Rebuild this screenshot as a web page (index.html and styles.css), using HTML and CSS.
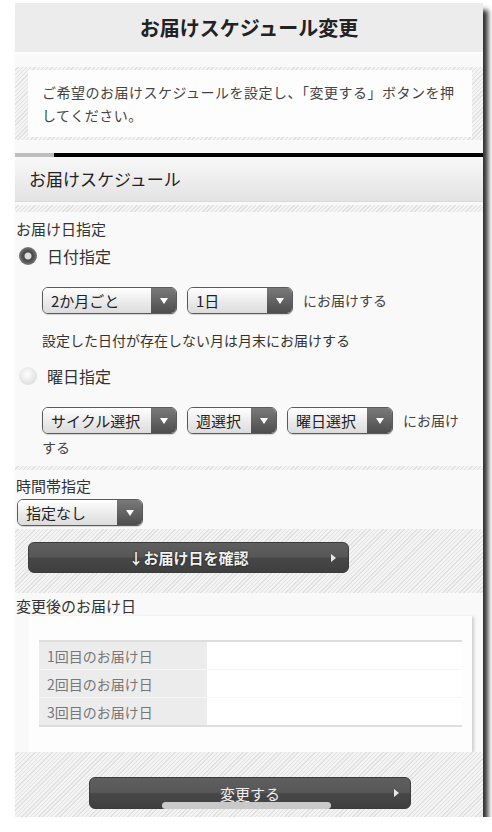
FILE: index.html
```html
<!DOCTYPE html>
<html lang="ja">
<head>
<meta charset="utf-8">
<title>お届けスケジュール変更</title>
<link rel="stylesheet" href="styles.css">
</head>
<body>
<div class="frame">
  <header class="hd"><h1>お届けスケジュール変更</h1></header>
  <div class="intro-wrap hatch"><p class="intro">ご希望のお届けスケジュールを設定し、「変更する」ボタンを押してください。</p></div>
  <div class="bar"></div>
  <h2 class="sec-hd">お届けスケジュール</h2>
  <div class="strip hatch"></div>

  <p class="label first">お届け日指定</p>
  <div class="radio-row"><span class="radio on"></span><span class="radio-text">日付指定</span></div>
  <div class="sel-row r1"><span class="sel w134"><span class="val">2か月ごと</span><span class="arr"><i></i></span></span><span class="sel w105"><span class="val">1日</span><span class="arr"><i></i></span></span><span class="after">にお届けする</span></div>
  <p class="note">設定した日付が存在しない月は月末にお届けする</p>
  <div class="radio-row r2"><span class="radio"></span><span class="radio-text">曜日指定</span></div>
  <div class="sel-row r2"><span class="sel w134"><span class="val">サイクル選択</span><span class="arr"><i></i></span></span><span class="sel w89"><span class="val">週選択</span><span class="arr"><i></i></span></span><span class="sel w105"><span class="val">曜日選択</span><span class="arr"><i></i></span></span><span class="after">にお届けする</span></div>

  <div class="divider hatch"></div>
  <p class="label time">時間帯指定</p>
  <div class="time-sel"><span class="sel w125"><span class="val">指定なし</span><span class="arr"><i></i></span></span></div>

  <div class="btn-area hatch"><a class="btn check">↓お届け日を確認<i class="tri"></i></a></div>

  <p class="label result-label">変更後のお届け日</p>
  <div class="result">
    <table>
      <tr><th>1回目のお届け日</th><td></td></tr>
      <tr><th>2回目のお届け日</th><td></td></tr>
      <tr><th>3回目のお届け日</th><td></td></tr>
    </table>
  </div>

  <div class="foot hatch">
    <a class="btn submit">変更する<i class="tri"></i></a>
    <span class="scroll"></span>
  </div>
</div>
</body>
</html>
```

FILE: styles.css
```css
html, body {
  margin: 0;
  padding: 0;
  background: #fff;
}
body {
  font-family: "Noto Sans CJK JP", "Noto Sans", sans-serif;
  color: #333;
  padding-top: 3px;
}
.frame {
  width: 468px;
  margin-left: 15px;
  background: #f9f9f9;
  box-shadow: 5px 7px 5px rgba(0, 0, 0, 0.82);
}
.hatch {
  background: repeating-linear-gradient(135deg, #f3f3f3 0px, #f3f3f3 2px, #e1e1e1 2px, #e1e1e1 3px);
}
.hd {
  height: 49px;
  background: #ececec;
  border-bottom: 2px solid #fdfdfd;
}
.hd h1 {
  margin: 0;
  font-size: 20px;
  line-height: 49px;
  font-weight: bold;
  text-align: center;
  color: #222;
}
.intro-wrap {
  margin-top: 13px;
  padding: 3px 11px 3px 13px;
}
.intro {
  margin: 0;
  background: #fdfdfd;
  padding: 11px 14px 10px 14px;
  font-size: 14px;
  letter-spacing: 0.5px;
  line-height: 23px;
  color: #444;
}
.bar {
  margin-top: 13px;
  height: 4px;
  background: linear-gradient(to right, #bdbdbd 39px, #000 39px);
}
.sec-hd {
  margin: 0;
  height: 44px;
  border-bottom: 1px solid #d9d9d9;
  background: linear-gradient(#f8f8f8, #e3e3e3);
  font-size: 17px;
  font-weight: normal;
  line-height: 44px;
  padding-left: 14px;
  color: #222;
}
.strip {
  margin-top: 3px;
  height: 7px;
}
.label {
  margin: 0;
  font-size: 15px;
  line-height: 20px;
  padding-left: 1px;
  color: #333;
}
.label.first { margin-top: 7px; }
.radio-row {
  margin-top: 5px;
  height: 24px;
  display: flex;
  align-items: center;
  padding-left: 4px;
}
.radio-row.r2 { margin-top: 14px; }
.radio {
  width: 18px;
  height: 18px;
  border-radius: 50%;
  background: radial-gradient(circle at 45% 40%, #ffffff 0%, #e6e6e6 55%, #d2d2d2 100%);
}
.radio.on {
  background: radial-gradient(circle at 50% 50%, #e4e4e4 0px, #d8d8d8 3px, #4a4a4a 4px, #555 6px, #7a7a7a 9px);
}
.radio-text {
  margin-left: 10px;
  font-size: 16px;
  color: #333;
}
.sel-row {
  margin-top: 19px;
  padding: 0 14px 0 27px;
  line-height: 27px;
  font-size: 14px;
}
.sel {
  display: inline-flex;
  vertical-align: top;
  height: 27px;
  box-sizing: border-box;
  border: 1px solid #5a5a5a;
  border-radius: 6px;
  overflow: hidden;
  margin-right: 10px;
  box-shadow: 0 1px 1px rgba(0, 0, 0, 0.15);
}
.sel .val {
  flex: 1;
  padding-left: 8px;
  background: linear-gradient(#ffffff, #e9e9e9 60%, #dcdcdc);
  font-size: 15px;
  line-height: 25px;
  color: #222;
  white-space: nowrap;
}
.sel .arr {
  width: 25px;
  background: linear-gradient(#7a7a7a, #4d4d4d);
  display: flex;
  align-items: center;
  justify-content: center;
}
.sel .arr i {
  width: 0;
  height: 0;
  border-left: 4px solid transparent;
  border-right: 4px solid transparent;
  border-top: 6px solid #fff;
}
.w134 { width: 135px; }
.w105 { width: 106px; }
.w89 { width: 90px; }
.w125 { width: 126px; }
.after {
  color: #444;
}
.note {
  margin: 16px 0 0 0;
  padding-left: 27px;
  font-size: 14px;
  line-height: 20px;
  color: #333;
}
.divider {
  margin-top: 5px;
  height: 4px;
}
.label.time { margin-top: 6px; }
.time-sel {
  margin-top: 3px;
  padding-left: 2px;
  height: 27px;
}
.btn-area {
  margin-top: 3px;
  height: 64px;
  box-sizing: border-box;
  padding: 13px 0 0 13px;
}
.btn {
  position: relative;
  display: flex;
  align-items: center;
  justify-content: center;
  box-sizing: border-box;
  border-radius: 6px;
  border: 1px solid #3c3c3c;
  background: linear-gradient(#5f5f5f 0%, #575757 48%, #474747 52%, #3f3f3f 100%);
  color: #fff;
  font-size: 15px;
  text-decoration: none;
}
.btn .tri {
  position: absolute;
  top: 50%;
  margin-top: -4px;
  width: 0;
  height: 0;
  border-top: 4px solid transparent;
  border-bottom: 4px solid transparent;
  border-left: 5px solid #e8e8e8;
}
.btn.check {
  width: 321px;
  height: 31px;
  font-weight: bold;
  text-shadow: 0 0 2px rgba(0, 0, 0, 0.9);
  color: #f2f2f2;
}
.btn.check .tri { right: 12px; }
.label.result-label { margin-top: 3px; }
.result {
  margin: 0 11px 0 13px;
  padding: 24px 10px 25px 11px;
  background: #fdfdfd;
  box-shadow: 2px 1px 3px rgba(0, 0, 0, 0.18);
}
.result table {
  width: 100%;
  border-collapse: collapse;
  border-top: 2px solid #dedede;
  border-bottom: 2px solid #dedede;
}
.result th, .result td {
  height: 27px;
  padding: 0;
  border-top: 1px solid #f6f6f6;
}
.result tr:first-child th, .result tr:first-child td { border-top: 0; }
.result th {
  width: 168px;
  background: #ececec;
  text-align: left;
  font-weight: normal;
  font-size: 14px;
  color: #777;
  padding-left: 8px;
  box-sizing: border-box;
}
.result td { background: #fff; }
.foot {
  position: relative;
  height: 65px;
  box-sizing: border-box;
  padding-top: 25px;
}
.btn.submit {
  width: 322px;
  height: 32px;
  margin: 0 auto 0 74px;
  color: #eee;
}
.btn.submit .tri { right: 11px; }
.scroll {
  position: absolute;
  left: 147px;
  top: 50px;
  width: 169px;
  height: 7px;
  border-radius: 4px;
  background: #c9c9c9;
}
```
